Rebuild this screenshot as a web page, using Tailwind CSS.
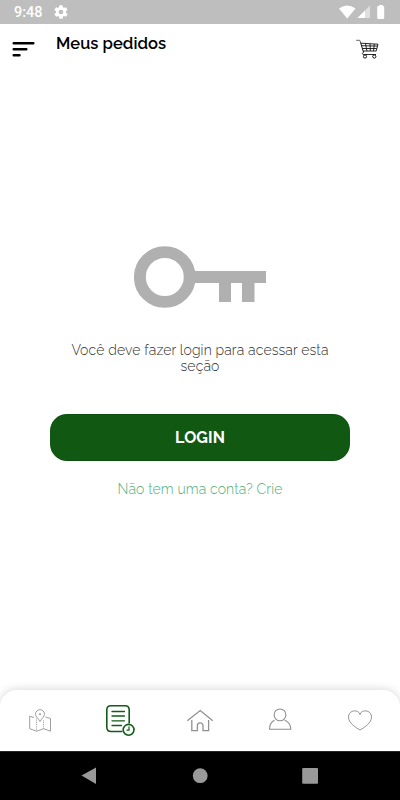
<!DOCTYPE html>
<html lang="pt-BR">
<head>
<meta charset="utf-8">
<meta name="viewport" content="width=device-width, initial-scale=1">
<title>Meus pedidos</title>
<script src="https://cdn.jsdelivr.net/npm/@tailwindcss/browser@4"></script>
</head>
<body class="bg-white">
<div class="flex h-[800px] w-[400px] flex-col overflow-hidden bg-white font-['Raleway','Lato',sans-serif]">
  <div class="flex h-6 shrink-0 items-center bg-[#bebebe] pl-[14px] pr-[14px]">
    <span class="w-[40px] pt-[2px] font-['Roboto',sans-serif] text-[14.500px] leading-6 font-medium text-white">9:48</span>
    <svg class="h-4 w-4 -ml-px" viewBox="0 0 24 24" fill="#fff"><path d="M19.4 13c0-.3.1-.7.1-1s0-.7-.1-1l2.100-1.600c.2-.2.3-.4.1-.7l-2-3.400c-.1-.3-.4-.3-.6-.3l-2.500 1c-.5-.4-1.100-.7-1.700-1l-.4-2.600c0-.2-.2-.4-.5-.4h-4c-.2 0-.5.2-.5.4L9 5c-.6.3-1.200.6-1.700 1l-2.500-1c-.2-.1-.5 0-.6.200l-2 3.500c-.1.2-.1.500.1.700L4.500 11c0 .3-.1.7-.1 1s0 .7.1 1l-2.100 1.600c-.2.2-.3.400-.1.700l2 3.400c.1.300.4.300.6.300l2.500-1c.5.4 1.100.7 1.700 1l.4 2.600c0 .2.3.4.5.4h4c.3 0 .5-.2.5-.4L15 19c.6-.3 1.200-.6 1.700-1l2.500 1c.2.1.5 0 .6-.2l2-3.500c.1-.2.1-.5-.1-.7zM12 15.500a3.500 3.500 0 1 1 0-7 3.500 3.500 0 0 1 0 7z"/></svg>
    <svg class="ml-auto h-6 w-[48px]" viewBox="338 0 48 24" fill="#fff"><path d="M339 8.500q8-6 16.500 0L347.200 18.500z"/><path opacity=".5" d="M357.500 18L370 5.500V18z"/><path d="M357.500 18L365 10.500V18z"/><path d="M379 6V5h4v1q1.200 0 1.200 1v11q0 1-1 1h-5q-1 0-1-1V7q0-1 1.800-1z"/></svg>
  </div>
  <header class="flex h-[46px] shrink-0 items-start">
    <svg class="mt-[17px] ml-3 h-[17px] w-[23px]" viewBox="0 0 23 17" stroke="#000" stroke-width="2.500" stroke-linecap="round"><path d="M1.700 2.200H21.300M1.700 8.300H14.300M1.700 14.300H7.500"/></svg>
    <h1 class="mt-[8px] ml-[21px] text-[16.500px] leading-[22px] font-semibold tracking-[0.060px] text-black">Meus pedidos</h1>
    <svg class="mt-[14px] mr-[20px] ml-auto h-[22px] w-[25px]" viewBox="355 38 25 22" fill="none" stroke="#111" stroke-width="1"><path stroke-linecap="round" stroke="#666" d="M356.500 40.300h3.300l.8 2.400"/><path d="M360.600 42.700l3 9.800"/><path stroke-width=".9" d="M361 43.200l17 1-1.800 6.800h-13M361.700 45.700l15.800.4M362.500 48.500h14.200M365.500 43.500l1.400 7.500M370 43.700l.4 7.300M374.300 44l-.8 7M363.500 52c-1.500 1-1.500 2.500.3 2.500H376"/><circle cx="365" cy="56.500" r="1.600"/><circle cx="374.300" cy="56.500" r="1.600"/></svg>
  </header>
  <main class="flex flex-1 flex-col items-center">
    <svg class="mt-[176px] h-[62px] w-[132px] shrink-0" viewBox="0 0 132 62" fill="#b0b0b0"><circle cx="30.800" cy="31" r="24.900" fill="none" stroke="#b0b0b0" stroke-width="11.900"/><path d="M60 25h72v12h-11.500v19H108V37H97v19H85V37H60z"/></svg>
    <p class="mt-[34px] w-[280px] text-center text-[14px] leading-4 font-light tracking-[0.120px] text-[#303030]">Você deve fazer login para acessar esta<br>seção</p>
    <button class="mt-[40px] flex h-[47px] w-[300px] shrink-0 items-center justify-center rounded-[17px] border-y border-[#0b4b0d]/70 bg-[#115912] pb-px pt-px text-[16px] font-bold tracking-[0.060px] text-white">LOGIN</button>
    <a class="mt-[19px] text-[14px] leading-[19px] font-light tracking-[0.100px] text-[#4cae7b]">Não tem uma conta? Crie</a>
  </main>
  <nav class="grid h-[61px] shrink-0 grid-cols-5 rounded-t-[17px] bg-white shadow-[0_-1px_9px_rgba(0,0,0,0.15)]">
    <svg class="h-[61px] w-20" viewBox="0 690 80 61" fill="none" stroke="#888" stroke-width=".8"><path d="M34 717.500l-4.300-1.300v12.500l7 2.500 7-2.500 6.800 2.500V718.500L45.500 717"/><path stroke-dasharray="1 .8" d="M36.600 718.500V731M43.500 720.500v8"/><path d="M40 721.500c-1.500-3-4.500-4.800-4.500-7.300a4.500 4.500 0 0 1 9 0c0 2.500-3 4.300-4.500 7.300z"/><circle cx="40" cy="714.200" r=".7"/></svg>
    <svg class="h-[61px] w-20" viewBox="80 690 80 61" fill="none" stroke="#125c18" stroke-width="1.600"><path d="M122.500 731.500H111q-4.200 0-4.200-4.200V710q0-4.200 4.200-4.200h14q4.200 0 4.200 4.200v13.500"/><path stroke-width="1.300" stroke-linecap="round" d="M112 711.500h12.500M112 716h12.500M112 720.800h12.500M112 725.500h9.500"/><circle cx="128.600" cy="729.800" r="5.400"/><path stroke-width="1.200" d="M129 726.500v3.700h-2.500"/></svg>
    <svg class="h-[61px] w-20" viewBox="160 690 80 61" fill="none" stroke="#909090" stroke-width="1.300"><path d="M187.300 720.700L200.200 710.500l12.600 10.200"/><path d="M191.800 720v10.600h5.600v-5a2.800 2.800 0 0 1 5.600 0v5h5.600V720"/></svg>
    <svg class="h-[61px] w-20" viewBox="240 690 80 61" fill="none" stroke="#909090" stroke-width="1.100"><circle cx="280" cy="714.900" r="5.900"/><path d="M274.500 720.200c-3.500 1.800-5 5.300-5 9.100h21.300c0-4.500-2.800-7.800-6.300-9.300"/></svg>
    <svg class="h-[61px] w-20" viewBox="320 690 80 61" fill="none" stroke="#888" stroke-width=".9"><path d="M360 714.500c-1-3-3-3.600-5.300-3.600-4 0-6.200 3-6.200 6.300 0 5.500 6.500 10 11.500 12.800 5-2.800 11.500-7.300 11.500-12.800 0-3.300-2.200-6.300-6.200-6.300-2.300 0-4.300.6-5.300 3.600z"/></svg>
  </nav>
  <div class="flex h-[49px] shrink-0 items-start border-t border-[#202820] bg-black">
    <svg class="h-12 w-[400px]" viewBox="0 752 400 48" fill="#999"><path d="M81.500 775.500L96 767.500v16.500z"/><circle cx="200.200" cy="775.700" r="7.400"/><rect x="302.200" y="768" width="15.800" height="15.800" rx="1"/></svg>
  </div>
</div>
</body>
</html>
